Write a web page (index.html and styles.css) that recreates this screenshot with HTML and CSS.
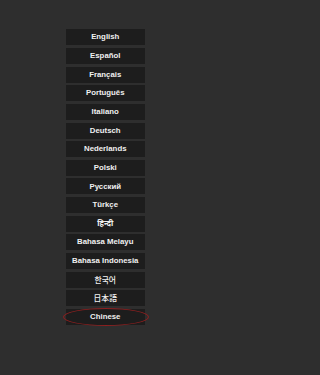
FILE: index.html
```html
<!DOCTYPE html>
<html lang="en">
<head>
<meta charset="utf-8">
<title>Language</title>
<link rel="stylesheet" href="styles.css">
</head>
<body>
<main class="screen">
  <ul class="lang-list">
    <li class="lang">English</li>
    <li class="lang">Español</li>
    <li class="lang">Français</li>
    <li class="lang">Português</li>
    <li class="lang">Italiano</li>
    <li class="lang">Deutsch</li>
    <li class="lang">Nederlands</li>
    <li class="lang">Polski</li>
    <li class="lang">Русский</li>
    <li class="lang">Türkçe</li>
    <li class="lang" lang="hi">हिन्दी</li>
    <li class="lang">Bahasa Melayu</li>
    <li class="lang">Bahasa Indonesia</li>
    <li class="lang cjk-kr" lang="ko">한국어</li>
    <li class="lang cjk-jp" lang="ja">日本語</li>
    <li class="lang selected">Chinese<span class="ring"></span></li>
  </ul>
</main>
</body>
</html>
```
FILE: styles.css
```css
html, body {
  margin: 0;
  padding: 0;
}
body {
  background: #2e2e2e;
  width: 210px;
  height: 375px;
  overflow: hidden;
  font-family: "Liberation Sans", Arial, "Noto Sans", sans-serif;
}
.screen {
  padding-top: 29.3px;
}
.lang-list {
  list-style: none;
  margin: 0;
  padding: 0;
  display: flex;
  flex-direction: column;
  align-items: center;
  gap: 2.65px;
}
.lang {
  position: relative;
  width: 79px;
  height: 16px;
  margin-left: 0.5px;
  background: #1d1d1d;
  color: #f0f0f0;
  font-size: 7.8px;
  font-weight: bold;
  display: flex;
  align-items: center;
  justify-content: center;
  line-height: 1;
}
.cjk-kr {
  font-family: "Noto Sans CJK KR", sans-serif;
  font-weight: 500;
}
.cjk-jp {
  font-family: "Noto Sans CJK JP", sans-serif;
  font-weight: 500;
}
.ring {
  position: absolute;
  left: -3px;
  right: -4px;
  top: -1px;
  bottom: -1px;
  border: 1.3px solid #8e1f1f;
  border-radius: 50%;
}
```
